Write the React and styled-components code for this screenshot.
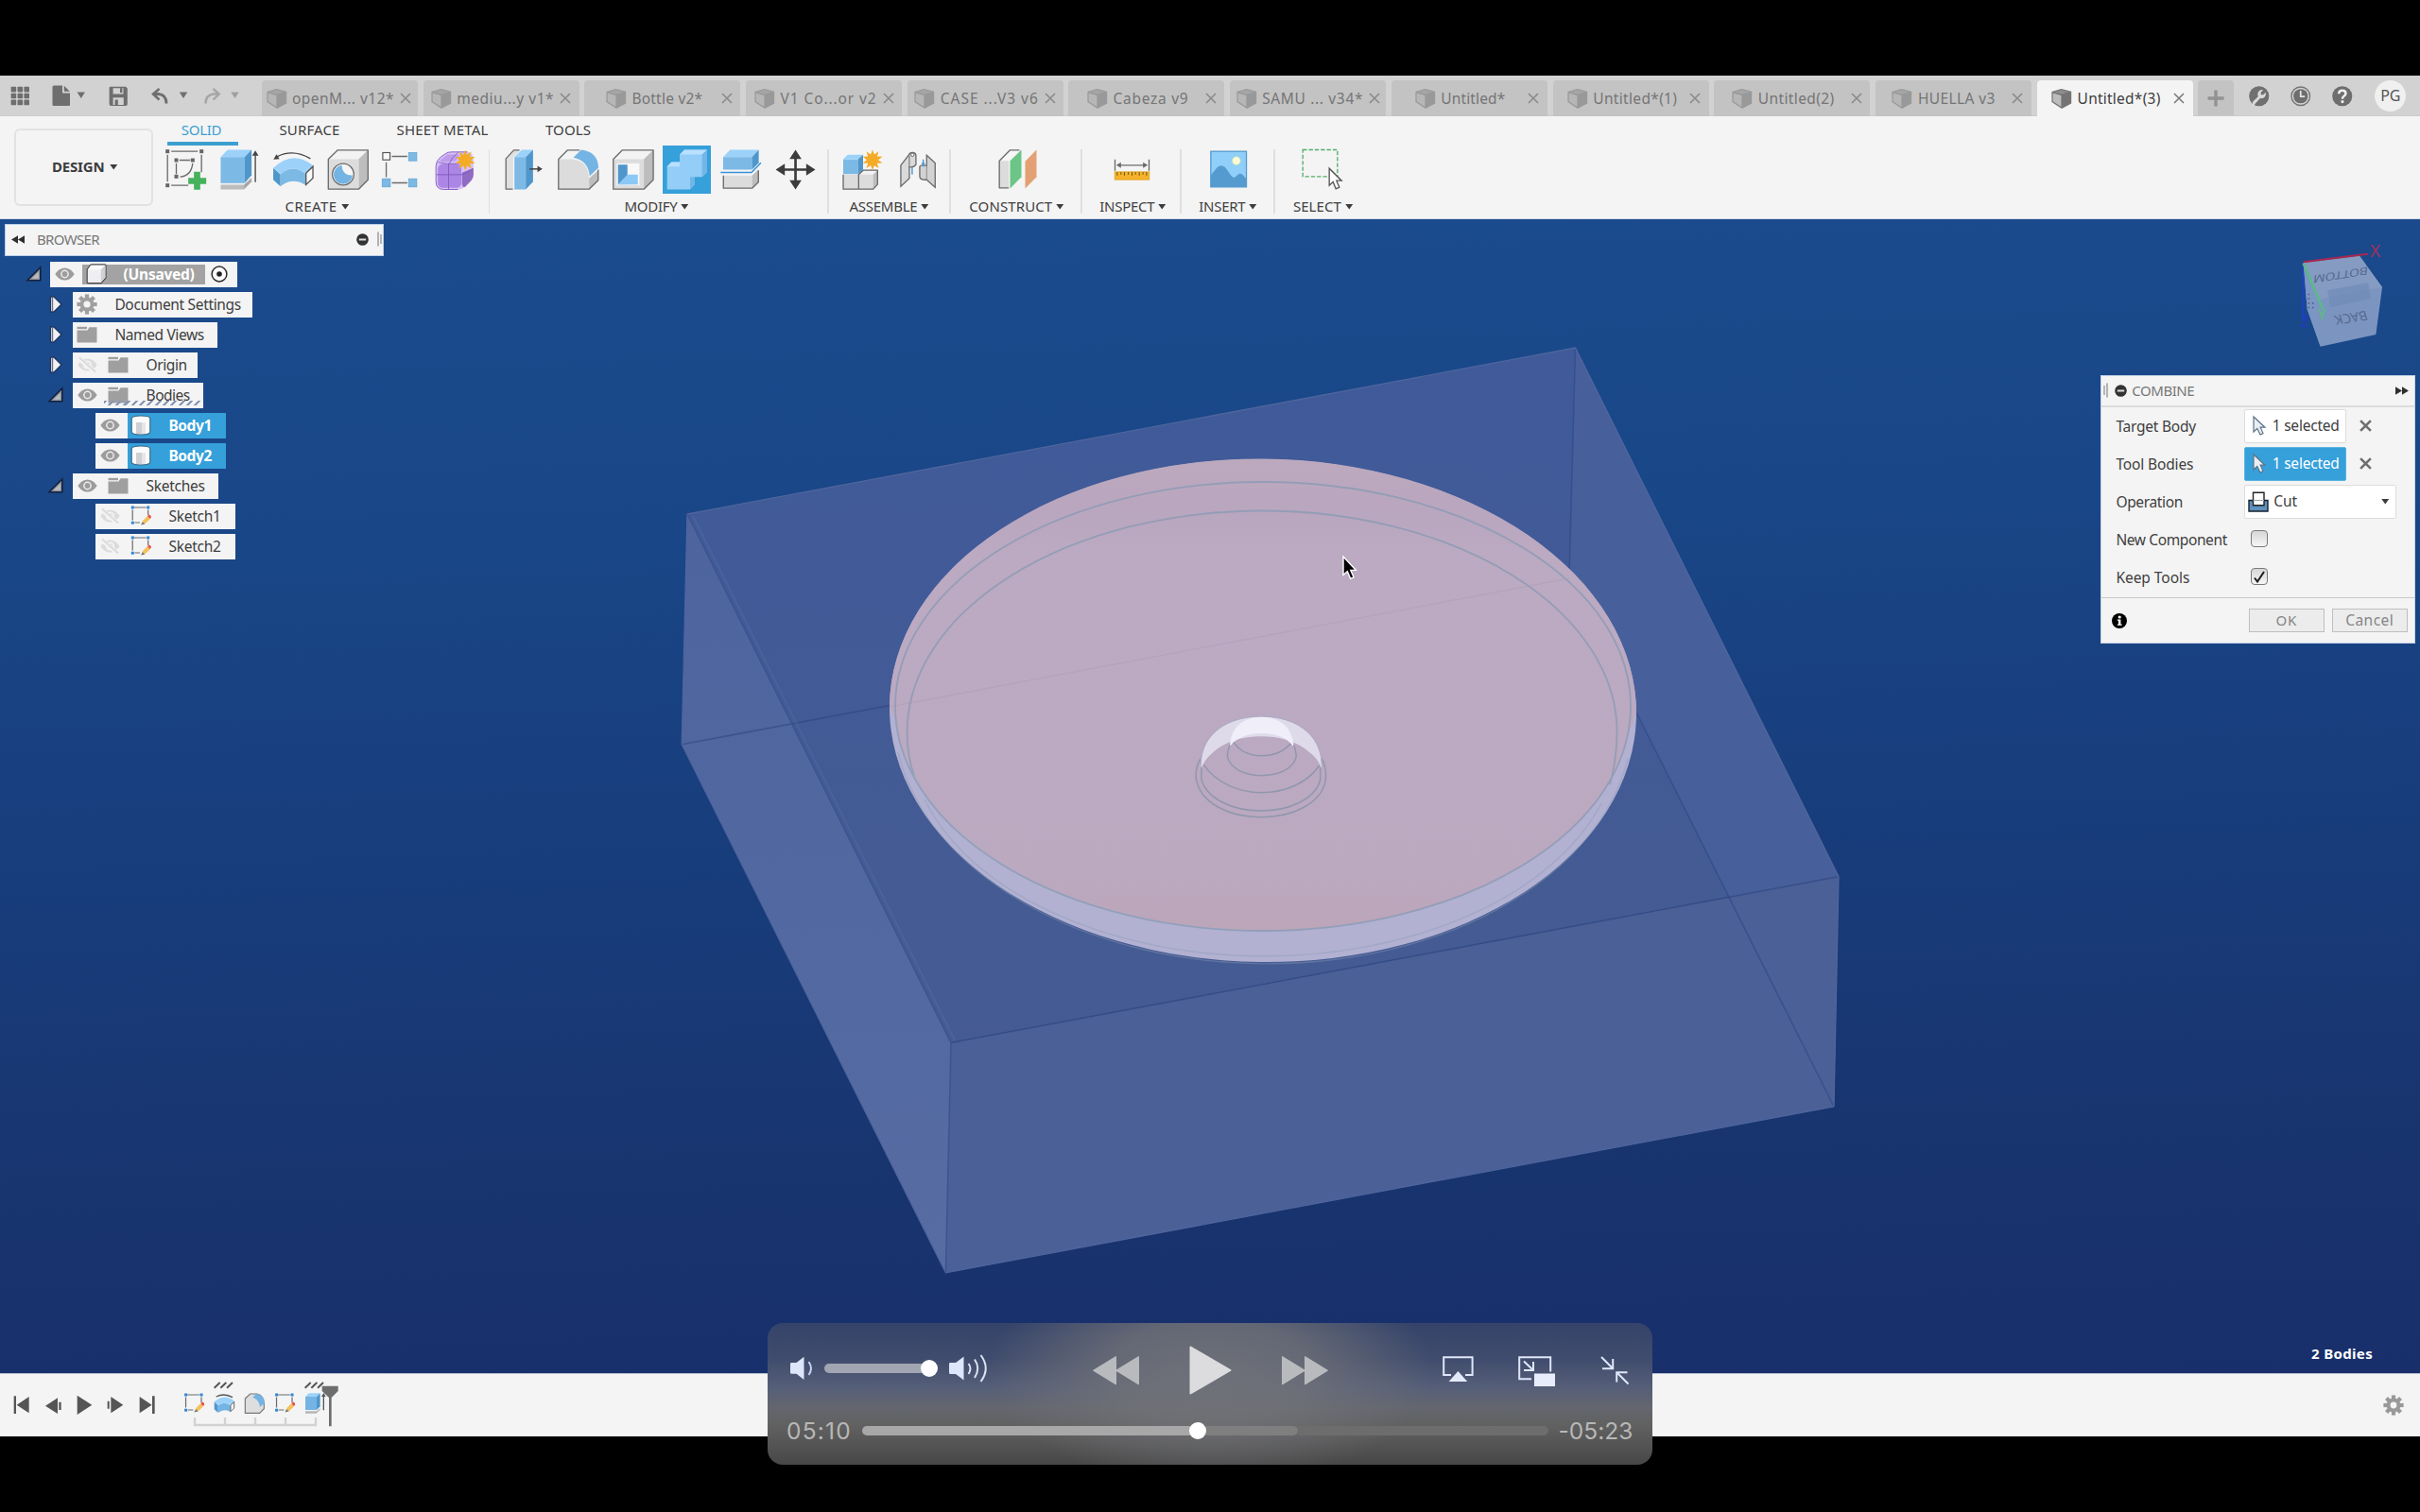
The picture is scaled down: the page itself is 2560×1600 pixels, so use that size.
import React, { useLayoutEffect, useRef } from "react";
import styled, { createGlobalStyle } from "styled-components";

const Global = createGlobalStyle`
  *, *::before, *::after { box-sizing: border-box; }
  body { margin: 0; background: #000; font-family: "Noto Sans", "Open Sans", sans-serif; }
  svg { display: block; flex: none; overflow: visible; }
`;

const BLUE = "#35a0da";

/* ---------- text that is tracked to a given width ---------- */

const LabelText = styled.span`
  display: inline-block;
  flex: none;
  white-space: pre;
  font-size: ${(p) => p.$size}px;
  font-weight: ${(p) => (p.$bold ? 700 : 400)};
  color: ${(p) => p.$color};
  line-height: 20px;
  margin-bottom: 1px;
  font-family: ${(p) => p.$font || "inherit"};
`;

function Label({ children, w, size = 15.5, bold, color = "#404040", font }) {
  const ref = useRef(null);
  useLayoutEffect(() => {
    const el = ref.current;
    el.style.letterSpacing = "0px";
    const natural = el.getBoundingClientRect().width;
    if (w) el.style.letterSpacing = `${(w - natural) / children.length}px`;
  }, [w, children]);
  return (
    <LabelText ref={ref} $size={size} $bold={bold} $color={color} $font={font}>
      {children}
    </LabelText>
  );
}

/* ---------- page frame ---------- */

const Screen = styled.div`
  position: relative;
  width: 2560px;
  height: 1600px;
  padding: 80px 0;
  background: #000;
  overflow: hidden;
`;

const Window = styled.div`
  display: flex;
  flex-direction: column;
  height: 1440px;
  background: #f4f4f4;
`;

/* ---------- title bar ---------- */

const TitleBar = styled.header`
  display: flex;
  align-items: flex-start;
  height: 42.7px;
  background: #d2d2d2;
  border-bottom: 1px solid #cacaca;
`;

const QuickTools = styled.div`
  display: flex;
  width: 277px;
  height: 42px;
  flex: none;
`;

const Tabs = styled.nav`
  display: flex;
  gap: 5.7px;
  padding-top: 5px;
`;

const Tab = styled.div`
  display: flex;
  align-items: center;
  gap: 6px;
  width: 165px;
  height: 38px;
  padding: 0 8.5px 0 ${(p) => p.$inset}px;
  border-radius: 4px 4px 0 0;
  background: ${(p) => (p.$active ? "#f4f4f4" : "#c3c3c3")};
  & > svg:last-child { margin-left: auto; }
`;

const PlusTab = styled.div`
  display: flex;
  align-items: center;
  justify-content: center;
  width: 37.5px;
  height: 37px;
  background: #c3c3c3;
  border-radius: 4px 4px 0 0;
`;

const Status = styled.div`
  display: flex;
  align-items: center;
  gap: 22.5px;
  height: 43px;
  margin-left: 16px;
`;

const Avatar = styled.div`
  display: flex;
  align-items: center;
  justify-content: center;
  width: 33px;
  height: 33px;
  margin-left: 1.5px;
  border-radius: 50%;
  background: #f0f0f0;
`;

const TABS = [
  ["openM... v12*", 4.5, 108],
  ["mediu...y v1*", 8, 103],
  ["Bottle v2*", 22.5, 75],
  ["V1 Co...or v2", 9, 102],
  ["CASE ...V3 v6", 7.5, 104],
  ["Cabeza v9", 19.5, 80],
  ["SAMU ... v34*", 6.5, 107],
  ["Untitled*", 25, 68],
  ["Untitled*(1)", 15.3, 89],
  ["Untitled(2)", 19, 81],
  ["HUELLA v3", 17.5, 82],
  ["Untitled*(3)", 15.5, 88],
];

const TabCube = ({ active }) => (
  <svg width="21.5" height="21" viewBox="0 0 21.5 21">
    <path d="M0.4 3 L10.5 0 L21.2 2.8 V15.5 L11 21 L0.4 14z" fill={active ? "#747474" : "#999999"} />
    <path d="M1.6 4.6 L10.4 7 V19 L1.6 13.2z" fill={active ? "#bcbcbc" : "#b6b6b6"} />
    <path d="M2.4 3.4 L10.5 1.2 L18.8 3.2 L11 5.6z" fill={active ? "#8d8d8d" : "#a6a6a6"} />
  </svg>
);

const Cross = ({ size = 12, color = "#8a8a8a", w = 1.6 }) => (
  <svg width={size} height={size} viewBox="0 0 12 12">
    <path d="M1 1 L11 11 M11 1 L1 11" stroke={color} strokeWidth={w} fill="none" />
  </svg>
);

const QuickIcons = () => (
  <svg width="277" height="42" viewBox="0 80 277 42">
    <g fill="#6e6e6e">
      {[0, 1, 2].map((r) =>
        [0, 1, 2].map((c) => (
          <rect key={`${r}${c}`} x={11.6 + c * 6.9} y={91.8 + r * 6.9} width="5.6" height="5.6" rx="0.8" />
        ))
      )}
      <path d="M57 90.5 H66 V98.5 H74 V111 Q74 112 73 112 H57 Q55.5 112 55.5 111 V92 Q55.5 90.5 57 90.5z" />
      <path d="M67.8 90.8 L73.8 96.8 H67.8z" />
      <path d="M81.5 97.5 H90 L85.8 104z" />
      <path fillRule="evenodd" d="M117 91.7 H133 L134.8 93.5 V110 Q134.8 112 133 112 H117.5 Q115.6 112 115.6 110 V93 Q115.6 91.7 117 91.7z M119.6 93.2 V99.5 H130.5 V93.2z M119.6 103.2 V111 H130.8 V103.2z" />
      <rect x="127" y="93.2" width="2.4" height="4.8" />
      <rect x="121.6" y="105.5" width="3.2" height="5.5" />
      <path d="M189.8 97.5 H198.3 L194 104z" />
    </g>
    <path d="M162 99.5 H168 Q176 100.5 176 109.5" stroke="#6e6e6e" strokeWidth="3" fill="none" />
    <path d="M168.5 94 L162 99.5 L168.5 105.5" stroke="#6e6e6e" strokeWidth="2.6" fill="none" />
    <path d="M231.5 99.5 H226 Q217.5 100.5 217.5 109.5" stroke="#a6a6a6" strokeWidth="2.6" fill="none" />
    <path d="M225.5 94 L231.8 99.5 L225.5 105.5" stroke="#a6a6a6" strokeWidth="2.4" fill="none" />
    <path d="M244.3 97.5 H252.8 L248.5 104z" fill="#a0a0a0" />
  </svg>
);

/* ---------- ribbon ---------- */

const Ribbon = styled.section`
  display: flex;
  height: 109px;
  flex: none;
  background: #f4f4f4;
  border-bottom: 1px solid #d5dbe2;
`;

const Workspace = styled.div`
  display: flex;
  align-items: center;
  gap: 5px;
  width: 147px;
  height: 82px;
  margin: 13.3px 0 0 15px;
  padding-left: 38px;
  border: 2px solid #e2e2e2;
  border-radius: 6px;
`;

const RibbonBody = styled.div`
  display: flex;
  flex-direction: column;
`;

const RibbonTabs = styled.div`
  display: flex;
  height: 31.8px;
`;

const RibbonTab = styled.div`
  display: flex;
  justify-content: center;
  width: ${(p) => p.$w}px;
  margin-left: ${(p) => p.$gap}px;
  padding-top: 4px;
  padding-right: ${(p) => (p.$on ? 2 : 0)}px;
  border-bottom: 4.2px solid ${(p) => (p.$on ? "#3d9fd0" : "transparent")};
`;

const Groups = styled.div`
  display: flex;
`;

const Group = styled.div`
  display: flex;
  flex-direction: column;
  width: ${(p) => p.$w}px;
`;

const IconRow = styled.div`
  display: flex;
  gap: 6.4px;
  padding-left: ${(p) => p.$pad}px;
`;

const IconCell = styled.div`
  width: 51px;
  height: 51px;
  flex: none;
  background: ${(p) => (p.$on ? BLUE : "transparent")};
`;

const GroupTitle = styled.div`
  display: flex;
  align-items: center;
  justify-content: center;
  gap: 4px;
  margin-top: 3px;
  padding: 0 ${(p) => p.$r || 0}px 0 ${(p) => p.$l || 0}px;
`;

const Divider = styled.div`
  width: 1.6px;
  height: 68px;
  margin-top: 3.5px;
  background: #dfdfdf;
  flex: none;
`;

const Caret = () => (
  <svg width="8.5" height="6" viewBox="0 0 8.5 6">
    <path d="M0.3 0 H8.2 L4.25 5.6z" fill="#3c3c3c" />
  </svg>
);

const starPoints = (cx, cy, r, inner = 0.55, n = 10) =>
  Array.from({ length: n * 2 }, (_, i) => {
    const a = (Math.PI * i) / n - Math.PI / 2;
    const k = i % 2 ? r * inner : r;
    return `${(cx + k * Math.cos(a)).toFixed(1)},${(cy + k * Math.sin(a)).toFixed(1)}`;
  }).join(" ");

const LINE = { stroke: "#6b6b6b", strokeWidth: 4, fill: "none", strokeLinejoin: "round" };

const Tool = ({ x, on, children }) => (
  <IconCell $on={on}>
    <svg width="51" height="51" viewBox={`${x} 13.5 153 153`}>
      {children}
    </svg>
  </IconCell>
);

const CREATE = [
  <Tool key="sketch" x={31.5}>
    <g fill="#666">
      {[[44, 26], [152, 26], [44, 134], [72, 54], [124, 54], [72, 106]].map(([a, b]) => (
        <rect key={`${a}-${b}`} x={a} y={b} width="12" height="12" />
      ))}
    </g>
    <path d="M50 43V128 M62 32H146 M158 43V98 M62 140H116 M78 70V104 M88 60H122 M130 70C127 96 112 111 90 113" {...LINE} />
    <path d="M134 97h20v19h19v20h-19v18h-20v-18h-18v-20h18z" fill="#46b25c" />
  </Tool>,
  <Tool key="extrude" x={203.7}>
    <path d="M220 50H296V133H220z" fill="#7cb9e5" />
    <path d="M220 50L242 27H318L296 50z" fill="#9cd2fa" />
    <path d="M296 50L318 27V108L296 133z" fill="#4f96cb" />
    <path d="M220 138H294V153H220z" fill="#bcbcbc" />
    <path d="M294 138L318 116V128L294 153z" fill="#a5a5a5" />
    <path d="M330 42V130" stroke="#444" strokeWidth="4" />
    <path d="M330 29L340 46H320z" fill="#444" />
  </Tool>,
  <Tool key="revolve" x={375.9}>
    <path d="M398 50Q450 22 506 55" stroke="#444" strokeWidth="4" fill="none" />
    <path d="M389 58L398 41L408 56z" fill="#444" />
    <path d="M388 85L411 105V143L388 122z" fill="#4f96cb" />
    <path d="M411 105Q450 70 492 104V140Q450 112 411 143z" fill="#7cb9e5" />
    <path d="M388 85Q450 25 516 78L492 104Q450 70 411 105z" fill="#9cd2fa" />
    <path d="M492 101L514 80V117L492 138z" stroke="#555" strokeWidth="4" fill="#f8f8f8" />
  </Tool>,
  <Tool key="hole" x={548.1}>
    <path d="M561 57L591 28H687V122L657 152H561z" fill="#f3f3f3" />
    <path d="M657 57L687 28V122L657 152z" fill="#bdbdbd" />
    <path d="M561 57H657V152H561z" fill="#dcdcdc" />
    <path d="M561 57L591 28H687V122L657 152H561z" {...LINE} />
    <circle cx="608" cy="105" r="34" fill="#f6f6f6" stroke="#6b6b6b" strokeWidth="4" />
    <path d="M604 76C604 95 615 110 638 108A30 30 0 1 1 604 76z" fill="#74b4e4" />
  </Tool>,
  <Tool key="pattern" x={720.3}>
    <path d="M764 48H813 M746 67V114 M764 132H813" {...LINE} />
    <rect x="735" y="36" width="23" height="23" fill="#fafafa" stroke="#555" strokeWidth="3.5" />
    {[[816, 35], [732, 118], [816, 118]].map(([a, b]) => (
      <rect key={`${a}${b}`} x={a + 1} y={b + 1} width="26" height="26" fill="#7cb9e5" stroke="#5a9fd0" strokeWidth="2" />
    ))}
  </Tool>,
  <Tool key="form" x={892.5}>
    <path d="M905 78Q905 62 920 50L938 38Q944 34 955 34H1005Q1024 36 1024 60V105Q1024 120 1010 132L998 144Q988 153 975 153H930Q905 153 905 128z" fill="#d6c1f6" />
    <path d="M1024 85V105Q1024 120 1010 132L998 144Q990 150 988 135V100z" fill="#8f6bc4" />
    <rect x="911" y="72" width="75" height="76" rx="16" fill="#ac86e4" />
    <path d="M918 60L942 42H980L968 62Q940 66 922 66z" fill="#bd9cec" />
    <path d="M947 72Q955 50 975 36 M945 70V152 M906 106H988Q1008 98 1022 88 M988 78Q996 62 1010 52 M912 66Q930 74 985 70" stroke="#7e57bd" strokeWidth="2.5" fill="none" />
    <path d="M905 78Q905 62 920 50L938 38Q944 34 955 34H1005 M905 78V128Q905 153 930 153H975" stroke="#8a62c8" strokeWidth="3" fill="none" />
    <polygon points={starPoints(998, 60, 33)} fill="#f4ac26" />
  </Tool>,
];

const MODIFY = [
  <Tool key="press" x={26.4}>
    <path d="M45 55L70 28H90L68 52V152H45z" fill="#e0e0e0" />
    <path d="M88 28H70L45 55V152H67" {...LINE} />
    <path d="M72 50H108V153H72z" fill="#7cb9e5" />
    <path d="M72 50L95 27H131L108 50z" fill="#9cd2fa" />
    <path d="M108 50L131 27V128L108 153z" fill="#4f96cb" />
    <path d="M120 88H148" stroke="#444" strokeWidth="4.5" />
    <path d="M145 78L161 88L145 98z" fill="#444" />
  </Tool>,
  <Tool key="fillet" x={198.6}>
    <path d="M213 57L242 28H285Q338 35 339 92V125L310 152H213z" fill="#f4f4f4" />
    <path d="M310 118L339 92V125L310 152z" fill="#bdbdbd" />
    <path d="M213 57H258Q308 62 310 120V152H213z" fill="#dcdcdc" />
    <path d="M280 28H242L213 57V152H310L339 124V90" {...LINE} />
    <path d="M260 52L285 27Q338 33 340 84L312 110Q306 60 260 52z" fill="#74b4e4" />
  </Tool>,
  <Tool key="shell" x={370.8}>
    <path d="M385 57L414 28H512V122L482 152H385z" fill="#f3f3f3" />
    <path d="M482 57L512 28V122L482 152z" fill="#bdbdbd" />
    <path d="M385 57H482V152H385z" fill="#dcdcdc" />
    <path d="M385 57L414 28H512V122L482 152H385z" {...LINE} />
    <rect x="396" y="70" width="72" height="70" fill="#f8f8f8" />
    <path d="M400 74H430V108L400 138z" fill="#4f96cb" />
    <path d="M400 138L430 106H463V137z" fill="#8cc8f5" />
  </Tool>,
  <Tool key="combine" x={543} on>
    <path d="M557 80L571 66H597V42L612 27H684V98L668 113H644V138L630 153H557z" fill="#94cdf7" />
    <path d="M597 42L612 27H684L668 42z M557 80L571 66H597V80z" fill="#b8e0ff" />
    <path d="M668 42L684 27V98L668 113z M630 113H644V138L630 153z" fill="#72b6e8" />
  </Tool>,
  <Tool key="split" x={715.2}>
    <path d="M736 50H828V90H736z" fill="#7cb9e5" />
    <path d="M736 50L758 27H849L828 50z" fill="#9cd2fa" />
    <path d="M828 50L849 27V68L828 90z" fill="#4f96cb" />
    <path d="M728 99H826L856 68" stroke="#3a93d8" strokeWidth="4.5" fill="none" />
    <path d="M737 109H828V149H737z" fill="#dcdcdc" />
    <path d="M828 109L848 90V130L828 149z" fill="#bdbdbd" />
    <path d="M737 109V149H828L848 130V92" {...LINE} />
  </Tool>,
  <Tool key="move" x={887.4}>
    <path d="M964 45V135 M920 90H1008" stroke="#3c3c3c" strokeWidth="8" />
    <path d="M964 27L983 56H945z M964 153L983 124H945z M901 90L930 71V109z M1027 90L998 71V109z" fill="#3c3c3c" />
  </Tool>,
];

const ASSEMBLE = [
  <Tool key="component" x={1102}>
    <path d="M1117 106H1164V90H1226V136L1210 152H1117z" fill="#dcdcdc" />
    <path d="M1166 106L1180 92H1226L1212 106z" fill="#f2f2f2" />
    <path d="M1212 106L1226 92V136L1212 152z" fill="#bdbdbd" />
    <path d="M1117 106V152H1212L1226 137V92H1180L1166 106V152" {...LINE} />
    <path d="M1117 57H1164V104H1117z" fill="#7cb9e5" />
    <path d="M1117 57L1131 43H1180L1164 57z" fill="#9cd2fa" />
    <path d="M1164 57L1180 43V90L1164 104z" fill="#4f96cb" />
    <polygon points={starPoints(1210, 59, 33)} fill="#f4ac26" />
  </Tool>,
  <Tool key="joint" x={1274.2}>
    <path d="M1298 76L1323 44Q1326 35 1337 36Q1346 37 1346 46V74Q1340 84 1325 82V118L1298 143z" fill="#dadada" stroke="#6b6b6b" strokeWidth="4" />
    <path d="M1325 46V82" stroke="#6b6b6b" strokeWidth="3" />
    <circle cx="1335" cy="43" r="5" fill="#fff" stroke="#6b6b6b" strokeWidth="3" />
    <path d="M1380 44L1407 69V146L1380 122Q1358 124 1358 112V80Q1366 72 1380 78z" fill="#d2d2d2" stroke="#6b6b6b" strokeWidth="4" />
    <path d="M1380 78V122" stroke="#8a8a8a" strokeWidth="3" />
    <path d="M1334 84V106 M1369 58V80 M1364 70H1374" stroke="#3a93d8" strokeWidth="4" />
  </Tool>,
];

const SINGLE = {
  construct: (
    <Tool x={91.5}>
      <path d="M110 62L144 28H178L142 64V148H110z" fill="#f6f6f6" />
      <path d="M110 62H140V148H110z" fill="#dcdcdc" />
      <path d="M174 28H144L110 62V148H140" {...LINE} />
      <path d="M144 62L180 27V113L144 150z" fill="#6cc587" />
      <path d="M192 64L228 27V113L192 150z" fill="#e3a074" />
    </Tool>
  ),
  inspect: (
    <Tool x={455.5}>
      <path d="M478 58V94 M586 58V94 M488 76H576" {...LINE} />
      <path d="M482 76L497 67V85z M582 76L567 67V85z" fill="#6b6b6b" />
      <rect x="477" y="97" width="110" height="25" fill="#f5b22a" stroke="#dc9a17" strokeWidth="2" />
      <path d="M485 98v11 M497 98v8 M508 98v11 M520 98v8 M532 98v11 M543 98v8 M555 98v11 M567 98v8 M578 98v11" stroke="#6a5520" strokeWidth="3" />
    </Tool>
  ),
  insert: (
    <Tool x={761.5}>
      <rect x="782" y="32" width="113" height="113" fill="#90cff9" stroke="#559bd0" strokeWidth="4" />
      <circle cx="863" cy="62" r="13" fill="#fdfbd6" stroke="#c9dfae" strokeWidth="2" />
      <path d="M782 108C798 88 804 77 815 77C832 77 840 106 852 114C862 118 866 103 875 103C884 103 888 114 895 120V145H782z" fill="#559bd0" />
    </Tool>
  ),
  select: (
    <Tool x={1057.5}>
      <rect x="1073" y="27" width="110" height="85" fill="none" stroke="#52ad6b" strokeWidth="4" strokeDasharray="13 6" />
      <path d="M1157 86V140L1169 129L1178 151L1189 146L1180 125H1196z" fill="#fff" stroke="#555" strokeWidth="4" />
    </Tool>
  ),
};

function RibbonGroup({ w, pad, title, tw, l, r, children, last }) {
  return (
    <>
      <Group $w={w}>
        <IconRow $pad={pad}>{children}</IconRow>
        <GroupTitle $l={l} $r={r}>
          <Label w={tw} size={15}>{title}</Label>
          <Caret />
        </GroupTitle>
      </Group>
      {!last && <Divider />}
    </>
  );
}

/* ---------- viewport ---------- */

const Viewport = styled.main`
  display: flex;
  justify-content: space-between;
  position: relative;
  height: 1221.3px;
  flex: none;
  overflow: hidden;
  background: linear-gradient(178deg, #1b4c8e 0%, #194687 28%, #183e7d 50%, #183570 78%, #182f6b 100%);
`;

const SceneLayer = styled.div`
  position: absolute;
  inset: 0;
`;

const Scene = () => (
  <svg width="2560" height="1221" viewBox="0 232 2560 1221">
    <defs>
      <linearGradient id="top" x1="0" y1="0" x2="0" y2="1">
        <stop offset="0" stopColor="#405a9a" />
        <stop offset="1" stopColor="#455b92" />
      </linearGradient>
      <linearGradient id="left" x1="0" y1="0" x2="0" y2="1">
        <stop offset="0" stopColor="#4d649f" />
        <stop offset="1" stopColor="#566ca2" />
      </linearGradient>
      <linearGradient id="pink" x1="0" y1="0" x2="0" y2="1">
        <stop offset="0" stopColor="#bca9be" />
        <stop offset="0.12" stopColor="#b9a6bf" />
        <stop offset="0.2" stopColor="#bbaac2" />
        <stop offset="0.88" stopColor="#bba9c0" />
        <stop offset="1" stopColor="#bca5b9" />
      </linearGradient>
    </defs>
    <path d="M727 544L1666.5 368L1945 927.6L1006 1103.4z" fill="url(#top)" />
    <path d="M1666.5 368L1945 927.6L1940 1171L1660 612z" fill="#47609b" />
    <path d="M727 544L721.2 787.7L1000.4 1346.8L1006 1103.4z" fill="url(#left)" />
    <path d="M1006 1103.4L1945 927.6L1940 1171L1000.4 1346.8z" fill="#4a6096" />
    <path d="M1666.5 368L1660 612L1940 1171" stroke="#2f4a88" strokeWidth="1.6" fill="none" opacity="0.65" />
    <path d="M721.2 787.7L1660 612 M1006 1103.4L1945 927.6" stroke="#2d447f" strokeWidth="1.6" fill="none" opacity="0.55" />
    <path d="M727 544L1666.5 368L1945 927.6L1940 1171L1000.4 1346.8L721.2 787.7z" stroke="#4f659d" strokeWidth="1.3" fill="none" />
    <path d="M727 544L1006 1103.4L1000.4 1346.8" stroke="#3b5390" strokeWidth="1.6" fill="none" opacity="0.8" />
    <path d="M733 546L1010 1101" stroke="#546aa3" strokeWidth="2" fill="none" opacity="0.45" />

    <ellipse cx="1336" cy="752" rx="395" ry="266" fill="#b2b1d2" transform="rotate(0.8 1336 752)" />
    <path d="M941 748A395 266 0.8 0 1 1731 755L1723 775A389 237.5 0 0 1 949 766z" fill="url(#pink)" />
    <g fill="none" stroke="#8b9bb4" strokeWidth="1.8" opacity="0.8">
      <ellipse cx="1336" cy="747.5" rx="389" ry="237.5" />
      <path d="M967 821Q959.6 800 959.6 775A375.5 234.5 0 0 1 1710.6 775Q1710 806 1703 830" />
      <path d="M978 846A375.5 234.5 0 0 0 1694 850" strokeWidth="1.4" opacity="0.5" />
      <path d="M950 796A391 262 0.8 0 0 1722 803" strokeWidth="1.4" opacity="0.5" />
    </g>
    <path d="M941 748L1660 612" stroke="#a497b3" strokeWidth="1.4" opacity="0.3" />
    <g transform="translate(1220 730) scale(0.3333)">
      <path d="M152 250C148 145 230 86 342 85C455 86 537 145 534 250C527 232 518 216 500 202C455 160 395 148 342 148C285 148 225 165 190 198C170 215 158 232 152 250z" fill="#dfdaea" />
      <path d="M243 180C245 115 290 86 342 86C400 86 443 118 446 182C425 150 390 139 342 138C300 139 262 152 243 180z" fill="#efeef9" />
      <g fill="none" stroke="#9097ad" strokeWidth="4.5">
        <path d="M150 218C135 245 132 268 138 292C155 360 240 404 342 404C445 404 530 360 546 292C550 268 548 245 535 218" />
        <path d="M153 245V285C170 345 250 384 342 384C435 384 515 345 530 285V245" />
        <path d="M160 238C200 295 270 326 342 326C420 326 490 295 527 240" />
        <path d="M243 175Q235 195 235 212C245 250 290 272 342 272C400 272 445 250 454 212Q452 190 446 175" />
        <path d="M255 166C275 195 305 209 342 209C385 209 415 195 436 170" />
      </g>
      <path d="M151 235C152 135 240 85 342 84C450 85 536 138 535 240" stroke="#a9adc4" strokeWidth="3" fill="none" />
    </g>
    <path d="M1421 589V608.5L1425.3 604.6L1428.6 612.3L1432 610.8L1428.8 603.4H1434.3z" fill="#000" stroke="#fff" strokeWidth="1.4" />
  </svg>
);

const CubeLayer = styled.div`
  position: absolute;
  left: 2400px;
  top: 8px;
`;

const ViewCube = () => (
  <svg width="160" height="130" viewBox="600 0 480 390" fontFamily="Noto Sans">
    <path d="M710 114V300" stroke="#2040c4" strokeWidth="6" />
    <text x="703" y="318" fontSize="46" fill="#2238c8">Z</text>
    <path d="M710 114L888 92L960 192L940 342L764 380L722 262z" fill="#7c95c0" />
    <path d="M710 114L888 92L960 192L752 232z" fill="#859bc1" />
    <path d="M710 114L752 232L764 380L722 262z" fill="#7b96c2" />
    <path d="M787 202L915 178L925 228L795 256z" fill="#6d8bb6" opacity="0.7" />
    <path d="M710 112L915 86" stroke="#a82850" strokeWidth="6" />
    <text x="922" y="97" fontSize="52" fill="#a0305e" textLength="32" lengthAdjust="spacingAndGlyphs">X</text>
    <path d="M710 116L772 262" stroke="#5ab98a" strokeWidth="8" />
    <text x="757" y="296" fontSize="48" fill="#55c078" textLength="26" lengthAdjust="spacingAndGlyphs">Y</text>
    <text transform="translate(916 127) rotate(171) skewX(-14)" fontSize="33" fill="#566a90" textLength="176" lengthAdjust="spacingAndGlyphs">BOTTOM</text>
    <text transform="translate(908 266) rotate(171) skewX(8)" fontSize="42" fill="#566a90" textLength="104" lengthAdjust="spacingAndGlyphs">BACK</text>
    <path d="M727 212v50 M740 240v28" stroke="#4c6390" strokeWidth="5" strokeDasharray="5 9" />
  </svg>
);

/* ---------- browser tree ---------- */

const Browser = styled.aside`
  display: flex;
  flex-direction: column;
  position: relative;
  width: 410px;
  padding: 5px 0 0 5px;
`;

const BrowserHead = styled.div`
  display: flex;
  align-items: center;
  width: 401px;
  height: 34px;
  margin-bottom: 6.3px;
  padding: 0 0 1px 6px;
  background: #f4f4f4;
  border: 1px solid #b9cfe8;
`;

const HeadIcons = styled.div`
  display: flex;
  align-items: center;
  gap: 9px;
  margin-left: auto;
  padding-right: 1px;
`;

const HeadGap = styled.span`
  width: 13px;
`;

const Row = styled.div`
  display: flex;
  align-items: center;
  height: 27px;
  margin-bottom: 5px;
  padding-left: ${(p) => p.$indent}px;
`;

const RowBox = styled.div`
  display: flex;
  align-items: center;
  height: 27px;
  width: ${(p) => p.$w}px;
  margin-left: ${(p) => p.$ml}px;
  padding-left: 3.8px;
  background: #f4f4f4;
`;

const IconSlot = styled.div`
  display: flex;
  justify-content: center;
  width: 22px;
  flex: none;
  margin-right: ${(p) => p.$mr || 0}px;
`;

const RootName = styled.div`
  display: flex;
  align-items: center;
  gap: 18px;
  width: 130px;
  height: 21.5px;
  margin-left: 7.5px;
  padding-left: 4px;
  background: #a3a3a3;
`;

const Selected = styled.div`
  display: flex;
  align-items: center;
  gap: 18px;
  flex: 1;
  height: 27px;
  margin-left: 7.8px;
  padding-left: 3.5px;
  background: ${BLUE};
`;

const Hatch = styled.div`
  position: absolute;
  left: 110px;
  top: 192.5px;
  width: 102px;
  height: 5px;
  background: repeating-linear-gradient(135deg, #8797b4 0 2.2px, transparent 2.2px 5.87px);
`;

const Minus = ({ size = 13 }) => (
  <svg width={size} height={size} viewBox="0 0 13 13">
    <circle cx="6.5" cy="6.5" r="6.3" fill="#333" />
    <rect x="2.8" y="5.5" width="7.4" height="2" fill="#ddd" />
  </svg>
);

const Grip = ({ flip }) => (
  <svg width="5" height="16" viewBox="0 0 5 16" transform={flip ? "scale(-1 1)" : undefined}>
    <path d="M1 0.5V15.5" stroke="#8e8e8e" strokeWidth="1.3" />
    <path d="M4 3V13" stroke="#8e8e8e" strokeWidth="1.2" />
  </svg>
);

const Rewind = ({ flip }) => (
  <svg width="14" height="9" viewBox="0 0 14 9">
    <path d={flip ? "M0 0.3L7 4.5L0 8.7z M7 0.3L14 4.5L7 8.7z" : "M7 0.3L0 4.5L7 8.7z M14 0.3L7 4.5L14 8.7z"} fill="#2e2e2e" />
  </svg>
);

const OpenArrow = () => (
  <svg width="16" height="16" viewBox="0 0 16 16">
    <path d="M14.8 1V14.8H1z" fill="#8e9299" stroke="#15233f" strokeWidth="1.6" />
    <path d="M12.8 6V12.8H5.5z" fill="#b9bcc1" />
  </svg>
);

const ClosedArrow = () => (
  <svg width="16" height="18" viewBox="0 0 16 18">
    <path d="M2.5 1H6L14 9L6 17H2.5z" fill="#f0f2f5" stroke="#22365e" strokeWidth="1.4" />
    <path d="M4.6 2V16" stroke="#6b7484" strokeWidth="1.2" />
  </svg>
);

const Eye = () => (
  <svg width="21" height="14" viewBox="0 0 21 14">
    <path d="M0.3 7Q4.5 0.4 10.5 0.4Q16.5 0.4 20.7 7Q16.5 13.6 10.5 13.6Q4.5 13.6 0.3 7z" fill="#9c9c9c" />
    <circle cx="10.5" cy="7" r="4.4" fill="#ececec" />
    <circle cx="10.5" cy="7" r="2.9" fill="#9c9c9c" />
  </svg>
);

const EyeOff = () => (
  <svg width="21" height="18" viewBox="0 0 21 18">
    <path d="M0.3 9Q4.5 2.4 10.5 2.4Q16.5 2.4 20.7 9Q16.5 15.6 10.5 15.6Q4.5 15.6 0.3 9z" fill="#dcdcdc" />
    <circle cx="10.5" cy="9" r="4.6" fill="#f4f4f4" />
    <circle cx="10.5" cy="9" r="2.8" fill="#dcdcdc" />
    <path d="M1 2L19 17" stroke="#f4f4f4" strokeWidth="4.5" />
    <path d="M2 1.5L19 16.5" stroke="#dadada" strokeWidth="1.8" />
  </svg>
);

const Folder = () => (
  <svg width="22" height="18" viewBox="0 0 22 18">
    <path d="M0.5 4.6H11.5L13.5 1.2H21.5V17.5H0.5z" fill="#9f9f9f" />
    <rect x="0.5" y="0.8" width="10.5" height="2.4" fill="#9f9f9f" />
  </svg>
);

const Gear = ({ size = 22, hole = 3.6, color = "#a0a0a0", bg = "#f4f4f4" }) => (
  <svg width={size} height={size} viewBox="-11 -11 22 22">
    {[0, 45, 90, 135].map((a) => (
      <rect key={a} x="-2.1" y="-10.6" width="4.2" height="21.2" fill={color} transform={`rotate(${a})`} />
    ))}
    <circle r="7.4" fill={color} />
    <circle r={hole} fill={bg} />
  </svg>
);

const RootCube = () => (
  <svg width="22" height="22" viewBox="0 0 22 22">
    <path d="M1.2 6L4.5 1.5Q5 0.8 6 0.8H20Q21 0.8 21 2V15L16 20.6H2Q1.2 20.6 1.2 19.5z" fill="#fafafa" stroke="#4b4b4b" strokeWidth="1.2" />
    <path d="M15.5 6.5L20.3 1.5V14.6L15.5 20z" fill="#cfd0d4" />
    <path d="M2 6.5H15.5V20H2z" fill="#efeff3" />
  </svg>
);

const Cylinder = () => (
  <svg width="22" height="22" viewBox="0 0 22 22">
    <path d="M1.2 4Q1.2 1 11 1Q20.8 1 20.8 4V18Q20.8 21 11 21Q1.2 21 1.2 18z" fill="#fbfbfb" stroke="#3f6a86" strokeWidth="1.2" />
    <path d="M6 8H12V20H6z" fill="#cfcfd4" />
    <path d="M12 8H16V20H12z" fill="#e6e6ea" />
  </svg>
);

const SketchShape = () => (
  <g>
    <path d="M4 2H16.5 M2.2 4.5V15.5 M18.7 4.5V10 M4.5 18H10" stroke="#6b6b6b" strokeWidth="1.2" fill="none" />
    <g fill="#2f86d2">
      <rect x="0.8" y="0.5" width="3" height="3" />
      <rect x="17.2" y="0.5" width="3" height="3" />
      <rect x="0.8" y="16.7" width="3" height="3" />
    </g>
    <path d="M12 19.5L13 16L18 11L21 14L16 18.7z" fill="#f2c25c" />
    <path d="M18 11L19.5 9.8Q21 9.6 21.6 11L21.8 12.6L20.6 14z" fill="#e5504d" />
    <path d="M11 20.6L12.8 17.2L15.4 19.4z" fill="#777" />
  </g>
);

const SketchIcon = () => (
  <svg width="22" height="22" viewBox="0 0 22 22">
    <SketchShape />
  </svg>
);

const Target = () => (
  <svg width="18" height="18" viewBox="0 0 18 18">
    <circle cx="9" cy="9" r="7.9" fill="#fff" stroke="#2c2c2c" strokeWidth="1.5" />
    <circle cx="9" cy="9" r="2.8" fill="#222" />
  </svg>
);

const TreeText = ({ w, children, white }) => (
  <Label w={w} bold={white} color={white ? "#fff" : "#404040"}>{children}</Label>
);

function Folderish({ open, eye, w, tw, children }) {
  return (
    <Row $indent={46}>
      {open ? <OpenArrow /> : <ClosedArrow />}
      <RowBox $ml={10.3} $w={w}>
        {eye && <IconSlot $mr={11}>{eye === "on" ? <Eye /> : <EyeOff />}</IconSlot>}
        <IconSlot $mr={18.5}><Folder /></IconSlot>
        <TreeText w={tw}>{children}</TreeText>
      </RowBox>
    </Row>
  );
}

const BrowserPanel = () => (
  <Browser>
    <BrowserHead>
      <Rewind />
      <HeadGap />
      <Label w={66} size={15} color="#777">BROWSER</Label>
      <HeadIcons><Minus /><Grip /></HeadIcons>
    </BrowserHead>
    <Row $indent={22.5}>
      <OpenArrow />
      <RowBox $ml={9.8} $w={198}>
        <IconSlot><Eye /></IconSlot>
        <RootName>
          <RootCube />
          <TreeText w={75} white>(Unsaved)</TreeText>
        </RootName>
        <HeadIcons><Target /><span /></HeadIcons>
      </RowBox>
    </Row>
    <Row $indent={46}>
      <ClosedArrow />
      <RowBox $ml={10.3} $w={189.5}>
        <IconSlot $mr={18.3}><Gear /></IconSlot>
        <TreeText w={133.5}>Document Settings</TreeText>
      </RowBox>
    </Row>
    <Row $indent={46}>
      <ClosedArrow />
      <RowBox $ml={10.3} $w={152.5}>
        <IconSlot $mr={18.3}><Folder /></IconSlot>
        <TreeText w={94.5}>Named Views</TreeText>
      </RowBox>
    </Row>
    <Folderish eye="off" w={132} tw={43}>Origin</Folderish>
    <Folderish open eye="on" w={137.3} tw={46}>Bodies</Folderish>
    {["Body1", "Body2"].map((b) => (
      <Row key={b} $indent={96.3}>
        <RowBox $ml={0} $w={137.5}>
          <IconSlot><Eye /></IconSlot>
          <Selected>
            <Cylinder />
            <TreeText w={45.5} white>{b}</TreeText>
          </Selected>
        </RowBox>
      </Row>
    ))}
    <Folderish open eye="on" w={153.3} tw={62}>Sketches</Folderish>
    {["Sketch1", "Sketch2"].map((s) => (
      <Row key={s} $indent={96.3}>
        <RowBox $ml={0} $w={148}>
          <IconSlot $mr={11}><EyeOff /></IconSlot>
          <IconSlot $mr={18.5}><SketchIcon /></IconSlot>
          <TreeText w={55}>{s}</TreeText>
        </RowBox>
      </Row>
    ))}
    <Hatch />
  </Browser>
);

/* ---------- combine dialog ---------- */

const Dialog = styled.section`
  position: relative;
  width: 333px;
  height: 284px;
  margin: 165.3px 5.3px 0 0;
  background: #f4f4f4;
  border: 1px solid #c3d2e6;
`;

const DialogHead = styled.div`
  display: flex;
  align-items: center;
  height: 33px;
  padding: 0 6px 0 2px;
  border-bottom: 2px solid #dcdcdc;
  & > svg:nth-child(2) { margin: 0 5px 0 7.5px; }
  & > svg:last-child { margin-left: auto; }
`;

const Field = styled.div`
  display: flex;
  align-items: center;
  height: 40px;
  padding-left: 15.7px;
`;

const FieldName = styled.div`
  width: 135.3px;
  flex: none;
`;

const Fields = styled.div`
  height: 202px;
  border-bottom: 1px solid #c9c9c9;
`;

const Picker = styled.div`
  display: flex;
  align-items: center;
  gap: 6.5px;
  width: 108.5px;
  height: 36px;
  margin-right: 13.5px;
  padding-left: 8.5px;
  background: ${(p) => (p.$on ? BLUE : "#fff")};
  border: 1.5px solid ${(p) => (p.$on ? "#5ab3e2" : "#dcdcdc")};
  border-radius: 2px;
`;

const Combo = styled.div`
  display: flex;
  align-items: center;
  gap: 5px;
  width: 161.5px;
  height: 36px;
  padding: 0 6.5px 0 3.5px;
  background: #fff;
  border: 1.5px solid #dcdcdc;
  border-radius: 2px;
  & > svg:last-child { margin-left: auto; }
`;

const Check = styled.div`
  display: flex;
  align-items: center;
  justify-content: center;
  width: 18.5px;
  height: 18px;
  margin: 0 0 1px 7px;
  border: 1.5px solid #7a7a7a;
  border-radius: 4px;
  background: linear-gradient(#d6d6d6, #f6f6f6);
`;

const DialogFoot = styled.div`
  display: flex;
  align-items: center;
  gap: 8px;
  height: 48px;
  padding: 0 7px 0 11px;
  & > svg { margin-right: auto; }
`;

const PushButton = styled.div`
  display: flex;
  align-items: center;
  justify-content: center;
  width: 80px;
  height: 25px;
  border: 1px solid #bfbfbf;
  background: #ececec;
`;

const PickCursor = () => (
  <svg width="14" height="21" viewBox="0 0 14 21">
    <path d="M1 1V17L4.8 13.4L8 20L11 18.6L8.2 12.2H13z" fill="#e9eef2" stroke="#5b7389" strokeWidth="1.2" />
  </svg>
);

const CutIcon = () => (
  <svg width="22" height="22" viewBox="0 0 22 22">
    <path d="M1 9.5H21V21H1z" fill="#5e91bd" stroke="#14202e" strokeWidth="1.4" />
    <path d="M5.5 1.2H17V14.8H5.5z" fill="#fff" stroke="#222" strokeWidth="1.4" />
    <path d="M5.5 9.5H17" stroke="#aaa" strokeWidth="1.2" />
  </svg>
);

const CombineDialog = () => (
  <Dialog>
    <DialogHead>
      <Grip flip />
      <Minus />
      <Label w={66} size={15} color="#777">COMBINE</Label>
      <Rewind flip />
    </DialogHead>
    <Fields>
      <Field>
        <FieldName><Label w={84.5}>Target Body</Label></FieldName>
        <Picker><PickCursor /><Label w={71}>1 selected</Label></Picker>
        <Cross size={13} w={2.4} color="#6f6f6f" />
      </Field>
      <Field>
        <FieldName><Label w={82}>Tool Bodies</Label></FieldName>
        <Picker $on><PickCursor /><Label w={71} color="#fff">1 selected</Label></Picker>
        <Cross size={13} w={2.4} color="#6f6f6f" />
      </Field>
      <Field>
        <FieldName><Label w={70.5}>Operation</Label></FieldName>
        <Combo><CutIcon /><Label w={25}>Cut</Label><Caret /></Combo>
      </Field>
      <Field>
        <FieldName><Label w={117.5}>New Component</Label></FieldName>
        <Check />
      </Field>
      <Field>
        <FieldName><Label w={78}>Keep Tools</Label></FieldName>
        <Check>
          <svg width="12" height="13" viewBox="0 0 12 13">
            <path d="M1 7.5L4 11.5L11 1" stroke="#1c1c1c" strokeWidth="2" fill="none" />
          </svg>
        </Check>
      </Field>
    </Fields>
    <DialogFoot>
      <svg width="16" height="16" viewBox="0 0 16 16">
        <circle cx="8" cy="8" r="8" fill="#000" />
        <circle cx="8.2" cy="4" r="1.6" fill="#fff" />
        <path d="M5.8 6.6H9.4V11.5H10.6V12.8H5.8V11.5H7V7.8H5.8z" fill="#fff" />
      </svg>
      <PushButton><Label w={22.5} color="#858585" size={15}>OK</Label></PushButton>
      <PushButton><Label w={51} color="#858585">Cancel</Label></PushButton>
    </DialogFoot>
  </Dialog>
);

const SelectionCount = styled.div`
  position: absolute;
  right: 50px;
  bottom: 10px;
`;

/* ---------- timeline ---------- */

const Timeline = styled.footer`
  display: flex;
  align-items: flex-start;
  height: 67px;
  flex: none;
  padding: 0 17px 0 6px;
  background: #f4f4f4;
  border-top: 1px solid #b9bfcc;
`;

const Playback = styled.div`
  display: flex;
  padding-top: 16px;
`;

const Features = styled.div`
  display: flex;
  margin-left: 17.3px;
  padding-top: 6px;
`;

const TimelineEnd = styled.div`
  margin: 22px 0 0 auto;
`;

const PLAYBACK = [
  "M44 112H51V168H44z M92 114V166L53 140z",
  "M184 118V168L145 143z M188 131H195V156H188z",
  "M244 110V171L291 140z",
  "M341 128H347V152H341z M352 114V166L391 140z",
  "M444 114V166L483 140z M484 112H492V168H484z",
];

const BoxBlue = ({ x }) => (
  <g>
    <path d={`M${x} 114h36v42h-36z`} fill="#74b4e4" />
    <path d={`M${x} 114l11 -11h36l-11 11z`} fill="#9cd2fa" />
    <path d={`M${x + 36} 114l11 -11v42l-11 11z`} fill="#4f96cb" />
    <path d={`M${x} 160h37l10 -10v6l-12 11h-35z`} fill="#b5b5b5" />
    <path d={`M${x + 58} 112v45`} stroke="#555" strokeWidth="4" />
    <path d={`M${x + 58} 102l7 12h-14z`} fill="#555" />
  </g>
);

const FEATURES = [
  { kind: "sketch" },
  { kind: "revolve", hatch: true },
  { kind: "fillet" },
  { kind: "sketch" },
  { kind: "extrude", hatch: true },
];

const FeatureIcon = ({ i, kind, hatch }) => {
  const x = 570 + 96 * i;
  const c = x + 48;
  return (
    <svg width="32" height="52" viewBox={`${x} 60 96 156`}>
      {hatch && (
        <path d={`M${x + 14} 86l18 -17 M${x + 34} 86l18 -17 M${x + 54} 86l18 -17`} stroke="#555" strokeWidth="6" />
      )}
      {kind === "sketch" && (
        <g transform={`translate(${x + 13} 102) scale(3)`}>
          <SketchShape />
        </g>
      )}
      {kind === "revolve" && (
        <g>
          <path d="M686 114Q712 101 738 116" stroke="#555" strokeWidth="4" fill="none" />
          <path d="M680 130L692 142V165L680 154z" fill="#4f96cb" />
          <path d="M692 142Q712 126 732 142V163Q712 150 692 165z" fill="#74b4e4" />
          <path d="M680 130Q712 102 744 128L732 142Q712 126 692 142z" fill="#9cd2fa" />
          <path d="M732 142L743 130V150L732 161z" fill="#fff" stroke="#666" strokeWidth="3" />
        </g>
      )}
      {kind === "fillet" && (
        <g>
          <path d="M778 120L794 105H815Q838 110 838 136V152L824 166H778z" fill="#dedede" stroke="#777" strokeWidth="3.5" />
          <path d="M802 116L813 104Q838 108 840 134L825 146Q822 122 802 116z" fill="#74b4e4" />
        </g>
      )}
      {kind === "extrude" && <BoxBlue x={969} />}
      <path
        d={`M${i === 0 ? c : x} 204H${i === 4 ? c : x + 96} M${c} 180V208`}
        stroke="#d2d2d2"
        strokeWidth="7"
        fill="none"
      />
    </svg>
  );
};

/* ---------- video player overlay ---------- */

const Player = styled.div`
  position: absolute;
  left: 812px;
  top: 1400px;
  display: flex;
  flex-direction: column;
  width: 936px;
  height: 150px;
  border-radius: 16px;
  overflow: hidden;
  background:
    radial-gradient(ellipse 235px 120px at 50% 34%, rgba(117, 118, 122, 0.85) 0%, rgba(114, 115, 120, 0.75) 45%, rgba(112, 112, 118, 0) 100%),
    linear-gradient(#35436a 0%, #404c6d 25%, #565f78 46%, #64666e 60%, #616161 72%, #545454 86%, #474747 100%);
`;

const Controls = styled.div`
  display: flex;
  align-items: center;
  height: 100px;
`;

const Speaker = styled.svg`
  margin-top: -4px;
`;

const Volume = styled.div`
  display: flex;
  align-items: center;
  width: 118px;
  height: 18px;
  margin: -4px 13px 0 12px;
`;

const Bar = styled.div`
  height: 10px;
  width: ${(p) => p.$w}px;
  border-radius: ${(p) => p.$r};
  background: ${(p) => p.$c};
  flex: none;
`;

const Knob = styled.div`
  width: 18px;
  height: 18px;
  margin: 0 -9px;
  border-radius: 50%;
  background: #fff;
  flex: none;
  z-index: 1;
`;

const Spacer = styled.div`
  width: ${(p) => p.$w}px;
  flex: none;
`;

const Scrubber = styled.div`
  display: flex;
  align-items: center;
  height: 28px;
  padding-left: 20px;
`;

const Track = styled.div`
  display: flex;
  align-items: center;
  width: 726px;
  margin: 0 10.5px 0 11px;
`;

const VideoPlayer = () => (
  <Player>
    <Controls>
      <Spacer $w={23} />
      <Speaker width="25" height="26" viewBox="0 0 25 26">
        <path d="M1 8Q1 7 2.5 7H7.5L15.5 0.8V25L7.5 18.8H2.5Q1 18.8 1 17.5z" fill="#dde6fb" />
        <path d="M20.5 6Q25.5 13 20.5 20" stroke="#c6d2ee" strokeWidth="2" fill="none" />
      </Speaker>
      <Volume>
        <Bar $w={111} $r="5px 0 0 5px" $c="#a2a5b2" />
        <Knob />
      </Volume>
      <Speaker width="43" height="30" viewBox="0 0 43 30">
        <path d="M1 10Q1 9 2.5 9H8L16.5 2.5V27.5L8 21H2.5Q1 21 1 19.5z" fill="#dde6fb" />
        <path d="M21.5 10Q25.5 15 21.5 21 M28 5.5Q34.5 15 28 25 M34.5 1Q45 15 34.5 29" stroke="#dde3f2" strokeWidth="2" fill="none" />
      </Speaker>
      <Spacer $w={109.5} />
      <svg width="50" height="30" viewBox="0 0 50 30">
        <path d="M24.5 0.5V30L0.5 15.2z M48.5 0.5V30L24.5 15.2z" fill="#b9babd" stroke="#c4c5c8" strokeWidth="0.8" />
      </svg>
      <Spacer $w={52} />
      <svg width="45" height="52" viewBox="0 0 45 52">
        <path d="M1.5 1.5V50.5L43.5 26z" fill="#dcdcde" stroke="#dcdcde" strokeWidth="2" strokeLinejoin="round" />
      </svg>
      <Spacer $w={53} />
      <svg width="50" height="30" viewBox="0 0 50 30">
        <path d="M0.5 0.5V30L24.5 15.2z M24.5 0.5V30L48.5 15.2z" fill="#b9babd" stroke="#c4c5c8" strokeWidth="0.8" />
      </svg>
      <Spacer $w={120} />
      <svg width="33" height="30" viewBox="0 0 33 30">
        <path d="M9 20H1.2V1.2H31.6V20H24" stroke="#dfe6fa" strokeWidth="2" fill="none" />
        <path d="M16.4 16L26.2 27H6.6z" fill="#e4eafc" />
      </svg>
      <Spacer $w={47} />
      <svg width="39" height="30" viewBox="0 0 39 30">
        <path d="M14 24.2H1.2V1.2H34.2V16.5" stroke="#dfe6fa" strokeWidth="2" fill="none" />
        <path d="M6 5.5L15.5 14.5 M6 15H16V6" stroke="#dfe6fa" strokeWidth="2" fill="none" />
        <rect x="17" y="18.5" width="22" height="13.5" fill="#e8edfc" />
      </svg>
      <Spacer $w={48} />
      <svg width="31" height="30" viewBox="0 0 31 30">
        <path d="M1 1L13 13 M2 13.2H13.2V3 M29.5 29.5L17.5 17.5 M28.5 17.2H17.2V27.5" stroke="#dfe6fa" strokeWidth="2" fill="none" />
      </svg>
    </Controls>
    <Scrubber>
      <Label w={69} size={24.5} color="#b7b7b7" font="Inter, sans-serif">05:10</Label>
      <Track>
        <Bar $w={355} $r="5px 0 0 5px" $c="#a8a8a8" />
        <Knob />
        <Bar $w={106} $r="0 5px 5px 0" $c="#7f7f7f" />
        <Bar $w={265} $r="0 5px 5px 0" $c="#6d6d6d" />
      </Track>
      <Label w={79} size={24.5} color="#b7b7b7" font="Inter, sans-serif">-05:23</Label>
    </Scrubber>
  </Player>
);

/* ---------- app ---------- */

export default function App() {
  return (
    <>
      <Global />
      <Screen>
        <Window>
          <TitleBar>
            <QuickTools><QuickIcons /></QuickTools>
            <Tabs>
              {TABS.map(([name, inset, w], i) => {
                const active = i === TABS.length - 1;
                return (
                  <Tab key={name} $inset={inset} $active={active}>
                    <TabCube active={active} />
                    <Label w={w} color={active ? "#3f3f3f" : "#757575"}>{name}</Label>
                    <Cross color={active ? "#7b7b7b" : "#8a8a8a"} />
                  </Tab>
                );
              })}
              <PlusTab>
                <svg width="18" height="18" viewBox="0 0 18 18">
                  <path d="M9 0.5V17.5 M0.5 9H17.5" stroke="#929292" strokeWidth="3.4" />
                </svg>
              </PlusTab>
            </Tabs>
            <Status>
              <svg width="21.5" height="21.5" viewBox="0 0 22 22">
                <circle cx="11" cy="11" r="10.8" fill="#707070" />
                <path d="M3 22L4.5 16.5L10 11.5Q8.5 7 12 4.6Q13.5 3.8 15.5 4.2L13 7V9.5H15.5L18.2 6.8Q18.8 11 16 12.8Q14 13.8 12.2 13.2L7 19L5 22z" fill="#dadada" />
              </svg>
              <svg width="21.5" height="21.5" viewBox="0 0 22 22">
                <circle cx="11" cy="11" r="10" fill="#d8d8d8" stroke="#737373" strokeWidth="1.4" />
                <circle cx="11" cy="11" r="7.8" fill="#6e6e6e" />
                <path d="M11 5V11.4H15.5" stroke="#e4e4e4" strokeWidth="1.8" fill="none" />
              </svg>
              <svg width="21.5" height="21.5" viewBox="0 0 22 22">
                <circle cx="11" cy="11" r="10.8" fill="#6e6e6e" />
                <path d="M7.3 8.4Q7.4 4.8 11 4.8Q14.8 4.8 14.8 8Q14.8 9.8 12.8 11Q11.2 12 11.2 14" stroke="#f0f0f0" strokeWidth="2.6" fill="none" />
                <circle cx="11.2" cy="17" r="1.6" fill="#f0f0f0" />
              </svg>
              <Avatar><Label w={21} size={16} color="#555">PG</Label></Avatar>
            </Status>
          </TitleBar>

          <Ribbon>
            <Workspace>
              <Label w={55.5} bold size={15} color="#3c3c3c">DESIGN</Label>
              <Caret />
            </Workspace>
            <RibbonBody>
              <RibbonTabs>
                <RibbonTab $on $w={75} $gap={14.5}><Label w={42.5} size={15} color="#3d9fd0">SOLID</Label></RibbonTab>
                <RibbonTab $w={64} $gap={44}><Label w={64} size={15}>SURFACE</Label></RibbonTab>
                <RibbonTab $w={97} $gap={60}><Label w={97} size={15}>SHEET METAL</Label></RibbonTab>
                <RibbonTab $w={48} $gap={60.5}><Label w={48} size={15}>TOOLS</Label></RibbonTab>
              </RibbonTabs>
              <Groups>
                <RibbonGroup w={354.5} pad={8.5} title="CREATE" tw={55} r={8}>{CREATE}</RibbonGroup>
                <RibbonGroup w={357.2} pad={10.7} title="MODIFY" tw={56} r={4}>{MODIFY}</RibbonGroup>
                <RibbonGroup w={127.6} pad={10.3} title="ASSEMBLE" tw={72}>{ASSEMBLE}</RibbonGroup>
                <RibbonGroup w={137} pad={44.7} title="CONSTRUCT" tw={88} l={2}>{SINGLE.construct}</RibbonGroup>
                <RibbonGroup w={103.8} pad={27.4} title="INSPECT" tw={58} l={4}>{SINGLE.inspect}</RibbonGroup>
                <RibbonGroup w={97} pad={24} title="INSERT" tw={49} l={1}>{SINGLE.insert}</RibbonGroup>
                <RibbonGroup w={101} pad={24} title="SELECT" tw={51} l={1} last>{SINGLE.select}</RibbonGroup>
              </Groups>
            </RibbonBody>
          </Ribbon>

          <Viewport>
            <SceneLayer><Scene /></SceneLayer>
            <CubeLayer><ViewCube /></CubeLayer>
            <BrowserPanel />
            <CombineDialog />
            <SelectionCount><Label w={65} bold size={15} color="#fff">2 Bodies</Label></SelectionCount>
          </Viewport>

          <Timeline>
            <Playback>
              {PLAYBACK.map((d, i) => (
                <svg key={d} width="33.33" height="33.33" viewBox={`${18 + 100 * i} 90 100 100`}>
                  <path d={d} fill="#555" />
                </svg>
              ))}
            </Playback>
            <Features>
              {FEATURES.map((f, i) => <FeatureIcon key={i} i={i} {...f} />)}
              <svg width="18" height="52" viewBox="1050 60 54 156">
                <path d="M1022 80H1073V96L1052 117V208H1044V117L1022 96z" fill="#6d6d6d" />
              </svg>
            </Features>
            <TimelineEnd><Gear hole={3.4} color="#999" /></TimelineEnd>
          </Timeline>
        </Window>
        <VideoPlayer />
      </Screen>
    </>
  );
}
